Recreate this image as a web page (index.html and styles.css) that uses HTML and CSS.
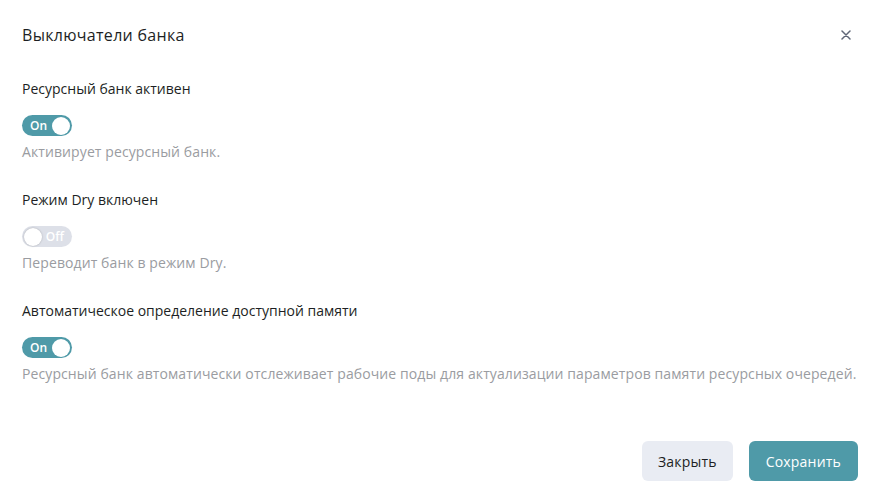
FILE: index.html
```html
<!DOCTYPE html>
<html lang="ru">
<head>
    <meta charset="UTF-8">
    <meta name="viewport" content="width=device-width, initial-scale=1.0">
    <title>Выключатели банка</title>
    <link rel="stylesheet" href="styles.css">
</head>
<body>
    <div class="modal">
        <header class="modal-header">
            <h2 class="modal-title">Выключатели банка</h2>
            <button class="close-btn" aria-label="Закрыть">
                <svg width="10" height="10" viewBox="0 0 10 10">
                    <path d="M1 1 L9 9 M9 1 L1 9" stroke="#5f6677" stroke-width="1.5" stroke-linecap="round"/>
                </svg>
            </button>
        </header>

        <div class="modal-body">
            <div class="field">
                <div class="field-label">Ресурсный банк активен</div>
                <label class="switch on">
                    <span class="switch-text">On</span>
                    <span class="knob"></span>
                </label>
                <div class="field-hint">Активирует ресурсный банк.</div>
            </div>

            <div class="field">
                <div class="field-label">Режим Dry включен</div>
                <label class="switch off">
                    <span class="knob"></span>
                    <span class="switch-text">Off</span>
                </label>
                <div class="field-hint">Переводит банк в режим Dry.</div>
            </div>

            <div class="field">
                <div class="field-label">Автоматическое определение доступной памяти</div>
                <label class="switch on">
                    <span class="switch-text">On</span>
                    <span class="knob"></span>
                </label>
                <div class="field-hint">Ресурсный банк автоматически отслеживает рабочие поды для актуализации параметров памяти ресурсных очередей.</div>
            </div>
        </div>

        <footer class="modal-footer">
            <button class="btn btn-light">Закрыть</button>
            <button class="btn btn-primary">Сохранить</button>
        </footer>
    </div>
</body>
</html>
```

FILE: styles.css
```css
* {
    box-sizing: border-box;
}

body {
    margin: 0;
    background: #fff;
    font-family: "Open Sans", "Noto Sans", sans-serif;
    color: #1d1f24;
}

.modal {
    width: 878px;
    height: 499px;
    padding: 0 20px 0 22px;
    display: flex;
    flex-direction: column;
}

.modal-header {
    display: flex;
    align-items: center;
    justify-content: space-between;
    height: 70px;
}

.modal-title {
    margin: 0;
    font-size: 16px;
    font-weight: 500;
    letter-spacing: 0.3px;
}

.close-btn {
    border: none;
    background: none;
    padding: 0;
    margin-right: 7px;
    width: 10px;
    height: 10px;
    display: flex;
    cursor: pointer;
}

.modal-body {
    display: flex;
    flex-direction: column;
    gap: 28px;
    padding-top: 9px;
}

.field-label {
    font-size: 14px;
    line-height: 20px;
    margin-bottom: 16px;
}

.field-hint {
    font-size: 14px;
    line-height: 20px;
    color: #9a9ca1;
    letter-spacing: 0.1px;
    margin-top: 6px;
}

.switch {
    width: 50px;
    height: 21px;
    border-radius: 11px;
    display: flex;
    align-items: center;
    justify-content: space-between;
    padding: 0 2px 0 8px;
    font-size: 12px;
    font-weight: 600;
    color: #fff;
}

.switch.on {
    background: #4f9aa8;
}

.switch.off {
    background: #dde0e8;
    padding: 0 8px 0 2px;
}

.knob {
    width: 18px;
    height: 18px;
    border-radius: 50%;
    background: #fff;
}

.switch.off .knob {
    box-shadow: 0 0 2px rgba(0, 0, 0, 0.25);
}

.modal-footer {
    margin-top: auto;
    display: flex;
    justify-content: flex-end;
    gap: 16px;
    padding-bottom: 18px;
}

.btn {
    height: 40px;
    border: none;
    border-radius: 6px;
    padding: 0 17px;
    font-family: inherit;
    font-size: 14px;
    font-weight: 500;
    letter-spacing: 0.2px;
    cursor: pointer;
}

.btn-light {
    background: #e9ecf3;
    color: #1d1f24;
    padding: 0 16px;
}

.btn-primary {
    background: #4f9aa8;
    color: #fff;
}
```
